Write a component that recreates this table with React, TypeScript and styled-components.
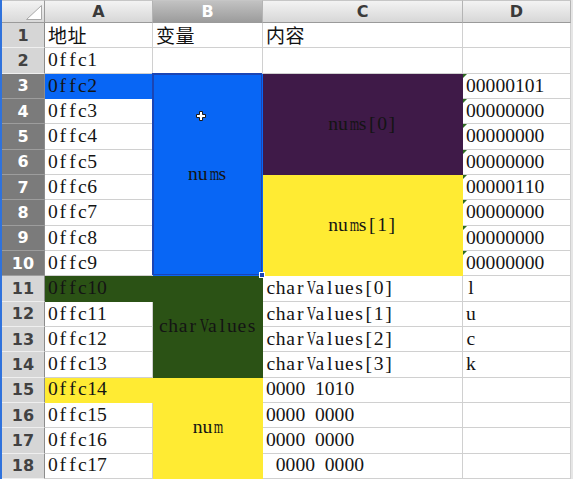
import React from 'react';
import styled, { createGlobalStyle, css } from 'styled-components';

const GlobalStyle = createGlobalStyle`
  html, body { margin: 0; padding: 0; background: #ffffff; }
  body { width: 573px; height: 481px; overflow: hidden; }
`;

const FILL = {
  blue: '#0866f5',
  purple: '#3f1a48',
  yellow: '#ffeb33',
  green: '#2b5215',
};

const Sheet = styled.div`
  position: relative;
  display: grid;
  grid-template-columns: 43px 108px 110px 200px 108px;
  grid-template-rows: 23px repeat(18, 25.333px);
  width: max-content;
  border-left: 2px solid #2f72dc;
  border-right: 2px solid #e6e6e6;
  background: #ffffff;
`;

const Corner = styled.div`
  grid-column: 1;
  grid-row: 1;
  display: flex;
  justify-content: flex-end;
  align-items: flex-end;
  padding: 0 2px 2px 0;
  box-sizing: border-box;
  background: linear-gradient(#f3f3f3, #d9d9d9);
  border-top: 1px solid #c6c6c6;
  border-right: 1px solid #9a9a9a;
  border-bottom: 1px solid #9a9a9a;
`;

const ColHeader = styled.div<{ $col: number; $selected?: boolean }>`
  grid-column: ${(p) => p.$col};
  grid-row: 1;
  display: flex;
  align-items: center;
  justify-content: center;
  box-sizing: border-box;
  border-top: 1px solid #c6c6c6;
  border-right: 1px solid #b4b4b4;
  border-bottom: 1px solid #9a9a9a;
  font-family: "DejaVu Sans", sans-serif;
  font-weight: bold;
  font-size: 16px;
  color: ${(p) => (p.$selected ? '#ffffff' : '#3a3a3a')};
  background: ${(p) =>
    p.$selected
      ? 'linear-gradient(#c2c2c2, #9c9c9c)'
      : 'linear-gradient(#f3f3f3, #d7d7d7)'};
`;

const RowHeader = styled.div<{ $row: number; $selected?: boolean }>`
  grid-column: 1;
  grid-row: ${(p) => p.$row};
  display: flex;
  align-items: center;
  justify-content: center;
  box-sizing: border-box;
  border-right: 1px solid #8c8c8c;
  border-bottom: 1px solid ${(p) => (p.$selected ? '#9d9d9d' : '#efefef')};
  font-family: "DejaVu Sans", sans-serif;
  font-weight: bold;
  font-size: 16px;
  color: ${(p) => (p.$selected ? '#ffffff' : '#424242')};
  background: ${(p) => (p.$selected ? '#7b7b7b' : '#d6d6d6')};
`;

const Cell = styled.div<{
  $col: number;
  $row: number;
  $span?: number;
  $bg?: string;
  $center?: boolean;
  $flag?: boolean;
  $active?: boolean;
}>`
  grid-column: ${(p) => p.$col};
  grid-row: ${(p) => p.$row} / span ${(p) => p.$span ?? 1};
  position: relative;
  display: flex;
  align-items: center;
  justify-content: ${(p) => (p.$center ? 'center' : 'flex-start')};
  padding-left: ${(p) => (p.$center ? 0 : 3)}px;
  box-sizing: border-box;
  background: ${(p) => p.$bg ?? '#ffffff'};
  border-right: 1px solid ${(p) => p.$bg ?? '#d0d0d0'};
  border-bottom: 1px solid ${(p) => p.$bg ?? '#d0d0d0'};
  color: #141414;
  font-family: "Liberation Serif", "Noto Sans CJK SC", serif;
  font-size: 19.6px;
  ${(p) =>
    p.$flag &&
    css`
      &::before {
        content: '';
        position: absolute;
        left: 0;
        top: 0;
        border-top: 4px solid #2e6b22;
        border-right: 4px solid transparent;
      }
    `}
  ${(p) =>
    p.$active &&
    css`
      z-index: 2;
      box-shadow: inset 0 0 0 1px #1b45b4, -1px -1px 0 0 #1b45b4;
    `}
`;

const Value = styled.span`
  display: inline-flex;
  line-height: 1.15;
  white-space: pre;
`;

const Glyph = styled.span<{ $scale?: number }>`
  display: inline-block;
  width: 0.5em;
  text-align: center;
  white-space: pre;
  ${(p) => p.$scale && css`transform: scaleX(${p.$scale});`}
`;

const Han = styled.span`
  font-family: "Noto Sans CJK SC", sans-serif;
  font-size: 19px;
  letter-spacing: 0.5px;
  line-height: 1.15;
  color: #111111;
`;

const Handle = styled.span`
  position: absolute;
  right: -3px;
  bottom: -3px;
  width: 4px;
  height: 4px;
  background: #1b45b4;
  border: 1px solid #ffffff;
`;

const Cursor = styled.svg`
  position: absolute;
  left: 43px;
  top: 37px;
`;

const WIDE: Record<string, number> = { m: 0.62, V: 0.66, w: 0.66, M: 0.58 };

function Mono({ text }: { text: string }) {
  return (
    <Value>
      {Array.from(text).map((ch, i) => (
        <Glyph key={i} $scale={WIDE[ch]}>
          {ch}
        </Glyph>
      ))}
    </Value>
  );
}

const COLS = ['A', 'B', 'C', 'D'];
const ROWS = Array.from({ length: 18 }, (_, i) => i + 1);

const aFill: Record<number, string> = { 3: FILL.blue, 11: FILL.green, 15: FILL.yellow };

const dValues: Record<number, string> = {
  3: '00000101',
  4: '00000000',
  5: '00000000',
  6: '00000000',
  7: '00000110',
  8: '00000000',
  9: '00000000',
  10: '00000000',
  11: 'l',
  12: 'u',
  13: 'c',
  14: 'k',
};

const cValues: Record<number, string> = {
  11: 'charValues[0]',
  12: 'charValues[1]',
  13: 'charValues[2]',
  14: 'charValues[3]',
  15: '0000 1010',
  16: '0000 0000',
  17: '0000 0000',
  18: ' 0000 0000',
};

export default function App() {
  // grid row index = sheet row + 1 (row 1 of grid is the column header)
  const g = (r: number) => r + 1;

  return (
    <>
      <GlobalStyle />
      <Sheet>
        <Corner>
          <svg width="16" height="15" viewBox="0 0 16 15">
            <path d="M15.5 0.5 V14.5 H0.5 Z" fill="#ffffff" stroke="#a8a8a8" strokeWidth="1" />
          </svg>
        </Corner>
        {COLS.map((c, i) => (
          <ColHeader key={c} $col={i + 2} $selected={c === 'B'}>
            {c}
          </ColHeader>
        ))}
        {ROWS.map((r) => (
          <RowHeader key={r} $row={g(r)} $selected={r >= 3 && r <= 10}>
            {r}
          </RowHeader>
        ))}

        {/* Column A */}
        <Cell $col={2} $row={g(1)}>
          <Han>地址</Han>
        </Cell>
        {ROWS.slice(1).map((r) => (
          <Cell key={`a${r}`} $col={2} $row={g(r)} $bg={aFill[r]}>
            <Mono text={`0ffc${r - 1}`} />
          </Cell>
        ))}

        {/* Column B */}
        <Cell $col={3} $row={g(1)}>
          <Han>变量</Han>
        </Cell>
        <Cell $col={3} $row={g(2)} />
        <Cell $col={3} $row={g(3)} $span={8} $bg={FILL.blue} $center $active>
          <Mono text="nums" />
          <Cursor width="10" height="10" viewBox="0 0 10 10">
            <path
              d="M3.5 0.5h3v3h3v3h-3v3h-3v-3h-3v-3h3z"
              fill="#ffffff"
              stroke="#1a1a1a"
              strokeWidth="1"
            />
          </Cursor>
          <Handle />
        </Cell>
        <Cell $col={3} $row={g(11)} $span={4} $bg={FILL.green} $center>
          <Mono text="charValues" />
        </Cell>
        <Cell $col={3} $row={g(15)} $span={4} $bg={FILL.yellow} $center>
          <Mono text="num" />
        </Cell>

        {/* Column C */}
        <Cell $col={4} $row={g(1)}>
          <Han>内容</Han>
        </Cell>
        <Cell $col={4} $row={g(2)} />
        <Cell $col={4} $row={g(3)} $span={4} $bg={FILL.purple} $center>
          <Mono text="nums[0]" />
        </Cell>
        <Cell $col={4} $row={g(7)} $span={4} $bg={FILL.yellow} $center>
          <Mono text="nums[1]" />
        </Cell>
        {ROWS.slice(10).map((r) => (
          <Cell key={`c${r}`} $col={4} $row={g(r)}>
            <Mono text={cValues[r]} />
          </Cell>
        ))}

        {/* Column D */}
        {ROWS.map((r) => (
          <Cell key={`d${r}`} $col={5} $row={g(r)} $flag={r >= 3 && r <= 10}>
            {dValues[r] ? <Mono text={dValues[r]} /> : null}
          </Cell>
        ))}
      </Sheet>
    </>
  );
}
